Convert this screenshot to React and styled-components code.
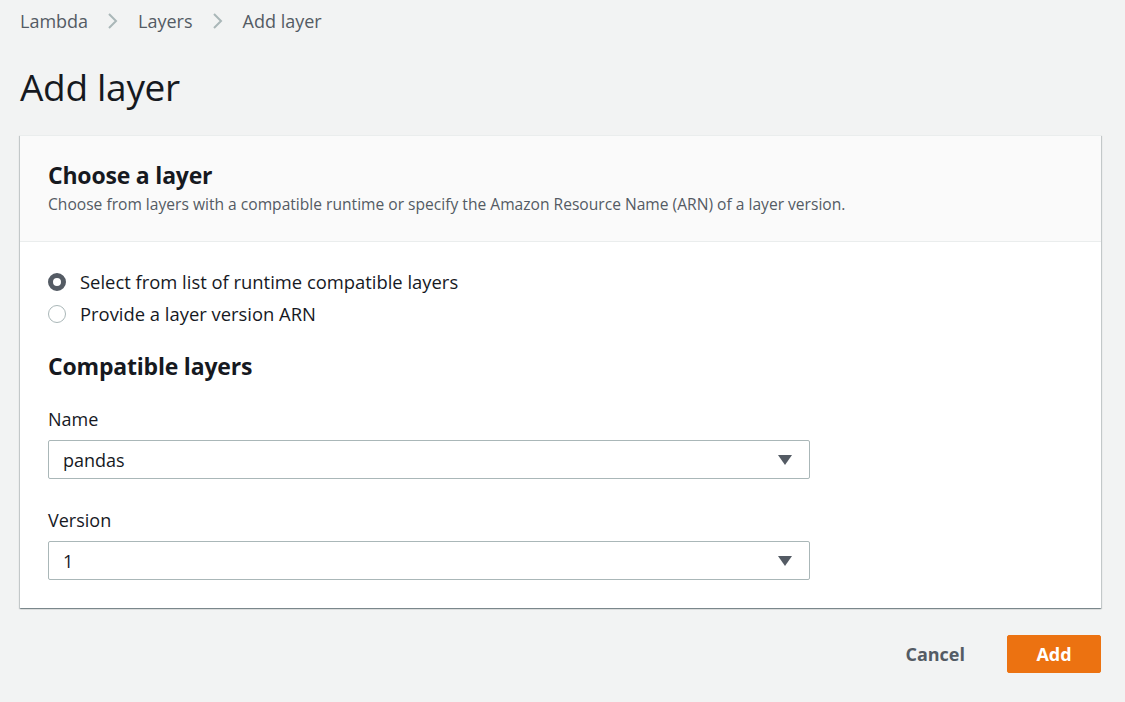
import React from "react";
import styled, { createGlobalStyle } from "styled-components";

const GlobalStyle = createGlobalStyle`
  body {
    margin: 0;
    background: #f2f3f3;
    font-family: "Open Sans", "Noto Sans", sans-serif;
    color: #16191f;
  }
`;

const Page = styled.div`
  padding: 8px 24px 0 20px;
`;

const Crumbs = styled.nav`
  display: flex;
  align-items: center;
  gap: 19px;
  height: 26px;
  font-size: 18px;
  color: #545b64;
`;

const Chevron = () => (
  <svg width="12" height="18" viewBox="0 0 12 18">
    <path d="M2 2 L9 9 L2 16" fill="none" stroke="#aab7b8" strokeWidth="2" />
  </svg>
);

const Title = styled.h1`
  margin: 32px 0 0;
  font-size: 37px;
  font-weight: 400;
  line-height: 42px;
  letter-spacing: -0.3px;
`;

const Card = styled.section`
  margin-top: 27px;
  background: #fff;
  border-top: 1px solid #eaeded;
  box-shadow: 0 1px 1px 0 rgba(0, 28, 36, 0.3), 1px 1px 1px 0 rgba(0, 28, 36, 0.15),
    -1px 1px 1px 0 rgba(0, 28, 36, 0.15);
`;

const CardHeader = styled.header`
  background: #fafafa;
  border-bottom: 1px solid #eaeded;
  padding: 24px 28px 26px;
`;

const SectionTitle = styled.h2`
  margin: 0;
  font-size: 23px;
  font-weight: 700;
  line-height: 30px;
  letter-spacing: -0.2px;
`;

const Description = styled.p`
  margin: 3px 0 0;
  font-size: 15.6px;
  color: #545b64;
  line-height: 22px;
`;

const CardBody = styled.div`
  padding: 29px 28px 28px;
`;

const RadioGroup = styled.div`
  display: flex;
  flex-direction: column;
  gap: 10px;
`;

const RadioRow = styled.label`
  display: flex;
  align-items: center;
  gap: 14px;
  font-size: 18.4px;
  line-height: 22px;
`;

const RadioDot = styled.span`
  width: 18px;
  height: 18px;
  border-radius: 50%;
  box-sizing: border-box;
  border: ${(p) => (p.checked ? "5px solid #545b64" : "1px solid #aab7b8")};
  background: #fff;
`;

const SubTitle = styled(SectionTitle)`
  margin-top: 26px;
`;

const Field = styled.div`
  margin-top: ${(p) => p.top}px;
  width: 762px;
`;

const Label = styled.div`
  font-size: 18px;
  line-height: 24px;
  margin-bottom: 9px;
`;

const Select = styled.div`
  height: 39px;
  box-sizing: border-box;
  border: 1px solid #aab7b8;
  border-radius: 2px;
  display: flex;
  align-items: center;
  justify-content: space-between;
  padding: 0 17px 0 14px;
  font-size: 18px;
`;

const Caret = () => (
  <svg width="14" height="10" viewBox="0 0 14 10">
    <path d="M0 0 H14 L7 10 Z" fill="#545b64" />
  </svg>
);

const Actions = styled.div`
  display: flex;
  justify-content: flex-end;
  align-items: center;
  gap: 22px;
  margin-top: 27px;
`;

const Button = styled.button`
  font-family: inherit;
  font-size: 18px;
  font-weight: 700;
  height: 38px;
  border-radius: 2px;
  cursor: pointer;
  padding: 0 20px;
  border: ${(p) => (p.primary ? "1px solid #ec7211" : "none")};
  background: ${(p) => (p.primary ? "#ec7211" : "transparent")};
  color: ${(p) => (p.primary ? "#fff" : "#545b64")};
  min-width: ${(p) => (p.primary ? "94px" : "auto")};
`;

export default function App() {
  return (
    <>
      <GlobalStyle />
      <Page>
        <Crumbs>
          <span>Lambda</span>
          <Chevron />
          <span>Layers</span>
          <Chevron />
          <span>Add layer</span>
        </Crumbs>
        <Title>Add layer</Title>
        <Card>
          <CardHeader>
            <SectionTitle>Choose a layer</SectionTitle>
            <Description>
              Choose from layers with a compatible runtime or specify the Amazon Resource Name (ARN) of a layer version.
            </Description>
          </CardHeader>
          <CardBody>
            <RadioGroup>
              <RadioRow>
                <RadioDot checked />
                Select from list of runtime compatible layers
              </RadioRow>
              <RadioRow>
                <RadioDot />
                Provide a layer version ARN
              </RadioRow>
            </RadioGroup>
            <SubTitle>Compatible layers</SubTitle>
            <Field top={26}>
              <Label>Name</Label>
              <Select>
                pandas
                <Caret />
              </Select>
            </Field>
            <Field top={29}>
              <Label>Version</Label>
              <Select>
                1
                <Caret />
              </Select>
            </Field>
          </CardBody>
        </Card>
        <Actions>
          <Button>Cancel</Button>
          <Button primary>Add</Button>
        </Actions>
      </Page>
    </>
  );
}
